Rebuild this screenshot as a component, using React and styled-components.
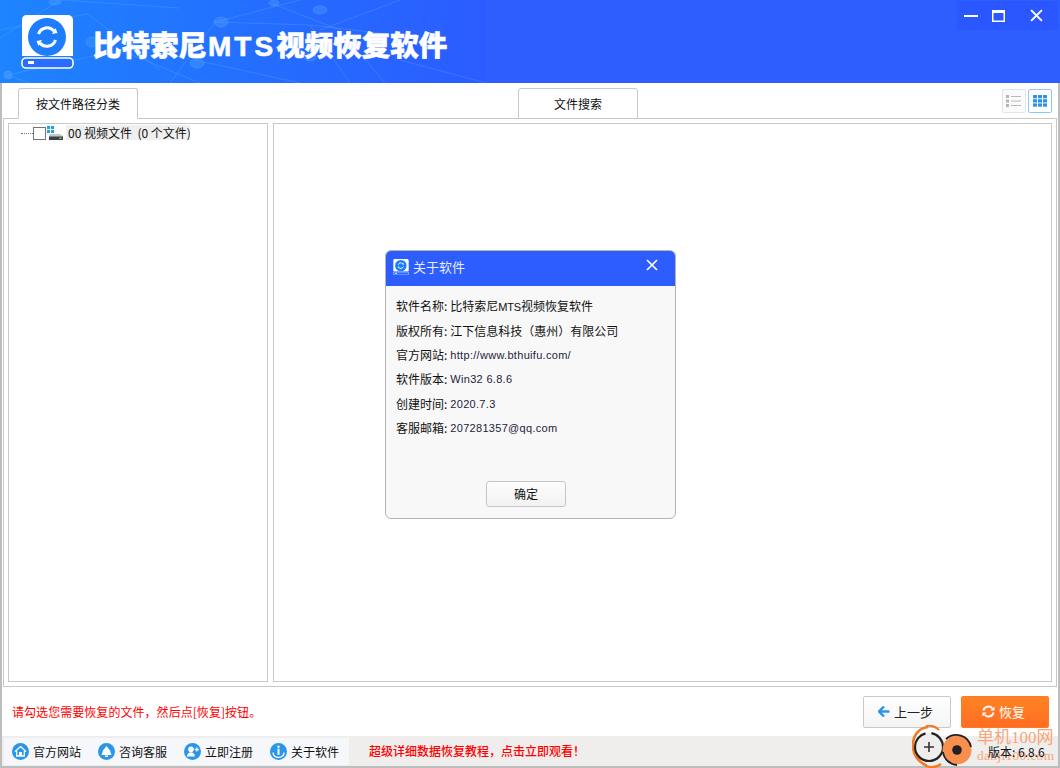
import React from "react";
import styled, { createGlobalStyle } from "styled-components";

const CJK = `"Noto Sans CJK SC", "Liberation Sans", sans-serif`;
const LATIN = `"Liberation Sans", "Noto Sans CJK SC", sans-serif`;

const Global = createGlobalStyle`
  html, body { margin: 0; padding: 0; background: #fff; }
  * { box-sizing: border-box; }
`;
const Page = styled.div`
  position: relative; width: 1060px; height: 768px; overflow: hidden;
  display: flex; flex-direction: column; background: #fff;
  font: 12px/16px ${CJK}; color: #111;
`;
const Header = styled.header`
  position: relative; height: 83px; flex: none; overflow: hidden;
  display: flex; align-items: flex-start; justify-content: space-between; background: #2f5eff;
`;
const HeaderArt = styled.div`
  width: 486px; height: 83px; position: absolute; left: 0; top: 0;
  background: linear-gradient(90deg, #1e84ff 0%, #2273ff 40%, #2b5cff 100%);
`;
const Brand = styled.div`
  position: relative; display: flex; align-items: flex-start; padding: 15px 0 0 21px; gap: 19px;
`;
const AppTitle = styled.h1`
  margin: 14px 0 0; font: 900 28.5px/30px ${CJK}; color: #fff; letter-spacing: 0;
  white-space: nowrap; -webkit-text-stroke: .6px #fff;
`;
const TitleLatin = styled.span`
  font: 700 28px/30px "Liberation Sans", sans-serif; letter-spacing: 3px; margin: 0 0 0 1px;
`;
const WinControls = styled.div`
  position: relative; display: flex; align-items: center; width: 101px; height: 29px;
  margin: 1px 2px 0 0; padding-left: 7px; background: #2a57ff;
`;
const WinBtn = styled.button`
  border: 0; background: none; padding: 0; width: ${p => p.$w}px; height: 20px;
  display: flex; align-items: center;
`;
const Body = styled.main`
  flex: 1; min-height: 0; display: flex; flex-direction: column;
  border-left: 2px solid #bdbdbd; border-right: 2px solid #bdbdbd;
`;
const TabRow = styled.div`
  height: 35px; flex: none; position: relative; z-index: 1; display: flex; align-items: flex-end;
  padding: 0 6px 0 16px;
`;
const Tab = styled.div`
  width: 120px; height: 31px; margin-left: ${p => p.$ml || 0}px;
  display: flex; align-items: center; justify-content: center;
  background: #fff; border: 1px solid #c8c8c8; border-radius: 3px 3px 0 0;
  border-bottom: ${p => (p.$active ? "1px solid #fff" : "1px solid #c8c8c8")};
  margin-bottom: -1px; font-size: 12px; color: #111;
`;
const ViewToggles = styled.div`
  margin-left: auto; align-self: flex-start; margin-top: 6px; display: flex; gap: 2px;
`;
const ViewBtn = styled.div`
  width: 24px; height: 24px; display: flex; align-items: center; justify-content: center;
  border-radius: 2px; background: ${p => (p.$on ? "#fff" : "#fbfbfb")};
  border: 1px solid ${p => (p.$on ? "#90c8f5" : "#e4e4e4")};
`;
const Frame = styled.div`
  height: 569px; flex: none; margin: 0 1px; padding: 4px;
  border: 1px solid #c8c8c8; display: flex; gap: 5px;
`;
const TreePane = styled.div`
  width: 260px; border: 1px solid #c8c8c8; padding: 1px 0 0 12px;
`;
const ContentPane = styled.div`flex: 1; border: 1px solid #c8c8c8;`;
const TreeRow = styled.div`display: flex; align-items: center; height: 16px;`;
const Dots = styled.span`width: 12px; border-top: 1px dotted #777;`;
const Check = styled.span`
  width: 13px; height: 13px; border: 1px solid #767676; background: #fff; flex: none; margin-right: 1px;
`;
const TreeLabel = styled.span`
  height: 15px; margin: -1px 0 0 3px; padding: 0 0 0 2px; background: #efefef; white-space: pre;
  font: 12px/15px ${CJK}; width: 124px;
`;
const ActionBar = styled.div`
  height: 49px; flex: none; display: flex; align-items: center; padding: 0 9px 0 10px; gap: 10px;
`;
const Hint = styled.div`color: #f00; font-size: 12px; letter-spacing: .05px; margin-right: auto; padding-top: 1px;`;
const Button = styled.button`
  width: 88px; height: 32px; border-radius: 2px; font: 13px/16px ${CJK};
  display: flex; align-items: center; justify-content: center; gap: 4px; padding: 0 3px 0 0;
  border: 1px solid ${p => (p.$primary ? "#ff7a22" : "#c9c9c9")};
  color: ${p => (p.$primary ? "#fff" : "#222")};
  background: ${p => (p.$primary ? "linear-gradient(#ff8324,#ff6d22)" : "linear-gradient(#fff,#f4f4f4)")};
`;
const StatusBar = styled.footer`
  height: 32px; flex: none; background: #f0eded; display: flex; align-items: center;
  border-left: 2px solid #bdbdbd; border-right: 2px solid #bdbdbd; border-bottom: 2px solid #bdbdbd;
  padding: 0 0 0 2px;
`;
const Nav = styled.nav`
  width: 345px; height: 27px; background: #f5f7fa; display: flex; align-items: center;
  padding-left: 8px;
`;
const NavItem = styled.div`
  width: 86px; flex: none; display: flex; align-items: center; gap: 4px; font-size: 12px; white-space: nowrap; color: #111;
`;
const NavText = styled.span`padding-top: 1px;`;
const Promo = styled.div`
  margin-left: 20px; color: #f00; font-size: 12px; font-weight: 500; white-space: nowrap;
`;
const Version = styled.div`
  position: absolute; left: 988px; top: 744px; font: 12px/16px ${CJK}; color: #111; z-index: 3;
`;
const Watermark = styled.div`
  position: absolute; left: 912px; top: 725px; width: 148px; height: 43px; z-index: 2;
`;
const WmCn = styled.div`
  position: absolute; left: 65px; top: 3px; font: 17px/19px "Liberation Serif", "Noto Sans CJK SC", serif;
  color: #f7a67a; white-space: nowrap;
`;
const WmEn = styled.div`
  position: absolute; left: 65px; top: 22px; font: 13.5px/18px "Liberation Serif", serif;
  color: #f7a67a; white-space: nowrap; letter-spacing: .3px;
`;
const Dialog = styled.section`
  position: absolute; left: 385px; top: 250px; width: 291px; height: 269px; z-index: 5;
  background: #f8f8f8; border: 1px solid #b4b4b4; border-radius: 6px; overflow: hidden;
  display: flex; flex-direction: column;
`;
const DlgHead = styled.div`
  height: 35px; flex: none; display: flex; align-items: center; padding: 0 17px 3px 7px; gap: 4px;
  background: #2d5cff; color: #e8eeff; font-size: 13px;
`;
const DlgClose = styled.button`
  margin-left: auto; border: 0; background: none; padding: 0; display: flex; margin-top: -4px;
`;
const DlgBody = styled.div`
  flex: 1; padding: 8px 10px 0; display: flex; flex-direction: column;
`;
const InfoRow = styled.div`
  height: 24.4px; flex: none; display: flex; align-items: center; font-size: 12px; white-space: nowrap; color: #111;
`;
const InfoVal = styled.span`
  margin-left: 3px; font-family: ${p => (p.$latin ? LATIN : CJK)}; font-size: ${p => (p.$latin ? "11px" : "12px")};
  color: ${p => (p.$latin ? "#1c1c3c" : "#111")}; letter-spacing: ${p => (p.$latin ? ".3px" : "0")};
`;
const Small = styled.span`font-family: "Liberation Sans", sans-serif; font-size: 11px; letter-spacing: -.2px;`;
const OkButton = styled.button`
  width: 80px; height: 26px; margin: auto 0 11px 90px; border: 1px solid #c6c6c6; border-radius: 3px;
  background: linear-gradient(#fdfdfd,#f2f2f2); font: 12px/16px ${CJK}; color: #111; padding: 0;
`;

const Pattern = () => (
  <svg width="486" height="83" viewBox="0 0 486 83" style={{ position: "absolute", left: 0, top: 0 }} fill="none" stroke="#6cb4ff" strokeOpacity=".28" strokeWidth="1">
    <path d="M0 38 60 0M0 30 88 14M8 75 120 50 200 83M88 14 160 70M215 22 300 0M215 22 310 25 440 40M215 22 170 83M273 4 340 30 385 83M310 25 350 83M320 30 400 0M180 8 60 0M195 60 300 83M6 75 30 83M400 60 486 83" />
    <ellipse cx="221" cy="22" rx="7" ry="5" fill="#6cb4ff" fillOpacity=".25" />
    <ellipse cx="197" cy="63" rx="7" ry="5" fill="#6cb4ff" fillOpacity=".25" />
    <ellipse cx="320" cy="10" rx="7" ry="4" fill="#6cb4ff" fillOpacity=".25" />
    <ellipse cx="274" cy="3" rx="5" ry="3" fill="#6cb4ff" fillOpacity=".25" />
    <ellipse cx="310" cy="57" rx="6" ry="4" fill="#6cb4ff" fillOpacity=".2" />
    <ellipse cx="55" cy="2" rx="6" ry="3" fill="#6cb4ff" fillOpacity=".25" />
    <ellipse cx="92" cy="42" rx="6" ry="5" fill="#6cb4ff" fillOpacity=".2" />
    <circle cx="8" cy="75" r="4" fill="#6cb4ff" fillOpacity=".3" />
  </svg>
);

const DiskLogo = ({ s = 53 }) => (
  <svg width={s} height={s * 54 / 53} viewBox="0 0 53 54">
    <path d="M5 0H47a5 5 0 0 1 5 5V41H1V5a5 5 0 0 1 4-5Z" fill="#fff" />
    <rect x="1" y="43" width="51" height="10" rx="4" fill="#2a6cff" stroke="#fff" strokeWidth="1.6" />
    <rect x="7" y="46" width="6" height="3" fill="#fff" />
    <circle cx="26" cy="22" r="19" fill="#1e7dff" />
    <g fill="none" stroke="#fff" strokeWidth="3" strokeLinecap="butt">
      <path d="M17.5 19a9 9 0 0 1 15.5-3" />
      <path d="M34.5 25a9 9 0 0 1-15.5 3" />
    </g>
    <path d="M36.5 18 31 19l3.5-6ZM15.5 26 21 25l-3.5 6Z" fill="#fff" />
  </svg>
);

const DriveIcon = () => (
  <svg width="16" height="14" viewBox="0 0 16 14">
    <g fill="#19a3ee">
      <rect x="0" y="0" width="3" height="3" /><rect x="4" y="0" width="3" height="3" />
      <rect x="0" y="4" width="3" height="3" /><rect x="4" y="4" width="3" height="3" />
    </g>
    <path d="M3 8H13L16 10V14H2V10Z" fill="#c4c8c8" />
    <rect x="2" y="10.5" width="14" height="3.5" fill="#3c4242" />
    <rect x="12.5" y="11.5" width="2" height="1.5" fill="#6ee05a" />
  </svg>
);

const Badge = ({ children }) => (
  <svg width="17" height="17" viewBox="0 0 17 17" style={{ flex: "none" }}>
    <circle cx="8.5" cy="8.5" r="8.5" fill="#2a96ea" />
    {children}
  </svg>
);

const HomeI = () => <Badge><path d="M8.5 3.5 13.5 8 12.3 8.6V13H4.7V8.6L3.5 8Z" fill="none" stroke="#fff" strokeWidth="1.3" /><rect x="7" y="9" width="3" height="4" fill="#fff" /></Badge>;
const BellI = () => <Badge><path d="M8.5 3 12 7.5 13.5 12H3.5L5 7.5Z" fill="#fff" /><rect x="7" y="12.5" width="3" height="1.5" fill="#fff" /></Badge>;
const UserI = () => <Badge><circle cx="7" cy="6.2" r="2.8" fill="#fff" /><path d="M2.8 13.5c.5-3 2.2-4.2 4.2-4.2s3.5 1 4 4.2Z" fill="#fff" /><path d="M12.8 4.5v4M10.8 6.5h4" stroke="#fff" strokeWidth="1.3" /></Badge>;
const InfoI = () => <Badge><circle cx="8.5" cy="3.8" r="1.2" fill="#fff" /><rect x="7.5" y="5.8" width="2" height="6" fill="#fff" /><path d="M3 9.5c0 3.5 2.5 4.8 5.5 4.8S14 13 14 9.5" fill="none" stroke="#fff" strokeWidth="1.3" /></Badge>;

const Cross = ({ s, w }) => (
  <svg width={s} height={s} viewBox="0 0 12 12"><path d="M1 1 11 11M11 1 1 11" stroke="#fff" strokeWidth={w} /></svg>
);

const Refresh = () => (
  <svg width="13" height="13" viewBox="0 0 14 14" fill="none" stroke="#fff" strokeWidth="2">
    <path d="M1.5 6a5.6 5.6 0 0 1 9.5-2.6M12.5 8a5.6 5.6 0 0 1-9.5 2.6" />
    <path d="M13.5 1.5V6H9ZM.5 12.5V8H5Z" fill="#fff" stroke="none" />
  </svg>
);

export default function App() {
  return (
    <Page>
      <Global />
      <Header>
        <HeaderArt><Pattern /></HeaderArt>
        <Brand>
          <DiskLogo />
          <AppTitle>比特索尼<TitleLatin>MTS</TitleLatin>视频恢复软件</AppTitle>
        </Brand>
        <WinControls>
          <WinBtn $w={28}><svg width="14" height="2"><rect width="14" height="2" fill="#fff" /></svg></WinBtn>
          <WinBtn $w={38}><svg width="13" height="12"><rect x=".75" y=".75" width="11.5" height="10.5" fill="none" stroke="#fff" strokeWidth="1.5" /><rect width="13" height="3" fill="#fff" /></svg></WinBtn>
          <WinBtn $w={14}><Cross s={13} w={1.8} /></WinBtn>
        </WinControls>
      </Header>
      <Body>
        <TabRow>
          <Tab $active>按文件路径分类</Tab>
          <Tab $ml={380}>文件搜索</Tab>
          <ViewToggles>
            <ViewBtn>
              <svg width="16" height="12" viewBox="0 0 16 12">
                <g fill="#b5b5b5"><rect width="3" height="3" /><rect y="4.5" width="3" height="3" /><rect y="9" width="3" height="3" /></g>
                <path d="M5 1.5H15M5 6H15M5 10.5H15" stroke="#b5b8bc" strokeWidth="1" />
              </svg>
            </ViewBtn>
            <ViewBtn $on>
              <svg width="15" height="12" viewBox="0 0 15 12" fill="#2c93e8">
                {[0, 4.2, 8.4].map(y => [0, 5, 10].map(x => <rect key={x + "-" + y} x={x} y={y} width="4" height="3.3" />))}
              </svg>
            </ViewBtn>
          </ViewToggles>
        </TabRow>
        <Frame>
          <TreePane>
            <TreeRow>
              <Dots />
              <Check />
              <DriveIcon />
              <TreeLabel>{"00 视频文件  (0 个文件)"}</TreeLabel>
            </TreeRow>
          </TreePane>
          <ContentPane />
        </Frame>
        <ActionBar>
          <Hint>请勾选您需要恢复的文件，然后点[恢复]按钮。</Hint>
          <Button>
            <svg width="12" height="11" viewBox="0 0 12 11"><path d="M6 .5 1 5.5l5 5M1.5 5.5H11.5" fill="none" stroke="#2e96ea" strokeWidth="2.4" /></svg>
            上一步
          </Button>
          <Button $primary><Refresh />恢复</Button>
        </ActionBar>
      </Body>
      <StatusBar>
        <Nav>
          <NavItem><HomeI /><NavText>官方网站</NavText></NavItem>
          <NavItem><BellI /><NavText>咨询客服</NavText></NavItem>
          <NavItem><UserI /><NavText>立即注册</NavText></NavItem>
          <NavItem><InfoI /><NavText>关于软件</NavText></NavItem>
        </Nav>
        <Promo>超级详细数据恢复教程，点击立即观看！</Promo>
      </StatusBar>
      <Watermark>
        <svg width="64" height="43" viewBox="0 0 64 43" style={{ position: "absolute", left: 0, top: 0 }}>
          <path d="M16 2C6 3 0 12 1 22c.5 8 6 15 14 19" fill="none" stroke="#f47a22" strokeWidth="2.6" />
          <path d="M14 1c5-1 10 1 13 4M14 41c5 2 11 1 15-2" fill="none" stroke="#f47a22" strokeWidth="2.2" />
          <circle cx="17" cy="22" r="14" fill="#f0eded" stroke="#222" strokeWidth="2.2" strokeDasharray="62 6" />
          <path d="M17 17v10M12 22h10" stroke="#333" strokeWidth="1.6" />
          <circle cx="45" cy="25" r="14.5" fill="#f98f4e" />
          <path d="M34 14a15 15 0 0 1 25 8M31 27a15 15 0 0 0 14 13" fill="none" stroke="#222" strokeWidth="1.8" />
          <circle cx="45" cy="25" r="4.8" fill="#222" />
        </svg>
        <WmCn>单机100网</WmCn>
        <WmEn>danji100.com</WmEn>
      </Watermark>
      <Version>版本: 6.8.6</Version>
      <Dialog>
        <DlgHead>
          <DiskLogo s={16} />
          关于软件
          <DlgClose><Cross s={12} w={1.7} /></DlgClose>
        </DlgHead>
        <DlgBody>
          <InfoRow>软件名称:<InfoVal>比特索尼<Small>MTS</Small>视频恢复软件</InfoVal></InfoRow>
          <InfoRow>版权所有:<InfoVal>江下信息科技（惠州）有限公司</InfoVal></InfoRow>
          <InfoRow>官方网站:<InfoVal $latin>http://www.bthuifu.com/</InfoVal></InfoRow>
          <InfoRow>软件版本:<InfoVal $latin>Win32 6.8.6</InfoVal></InfoRow>
          <InfoRow>创建时间:<InfoVal $latin>2020.7.3</InfoVal></InfoRow>
          <InfoRow>客服邮箱:<InfoVal $latin>207281357@qq.com</InfoVal></InfoRow>
          <OkButton>确定</OkButton>
        </DlgBody>
      </Dialog>
    </Page>
  );
}
